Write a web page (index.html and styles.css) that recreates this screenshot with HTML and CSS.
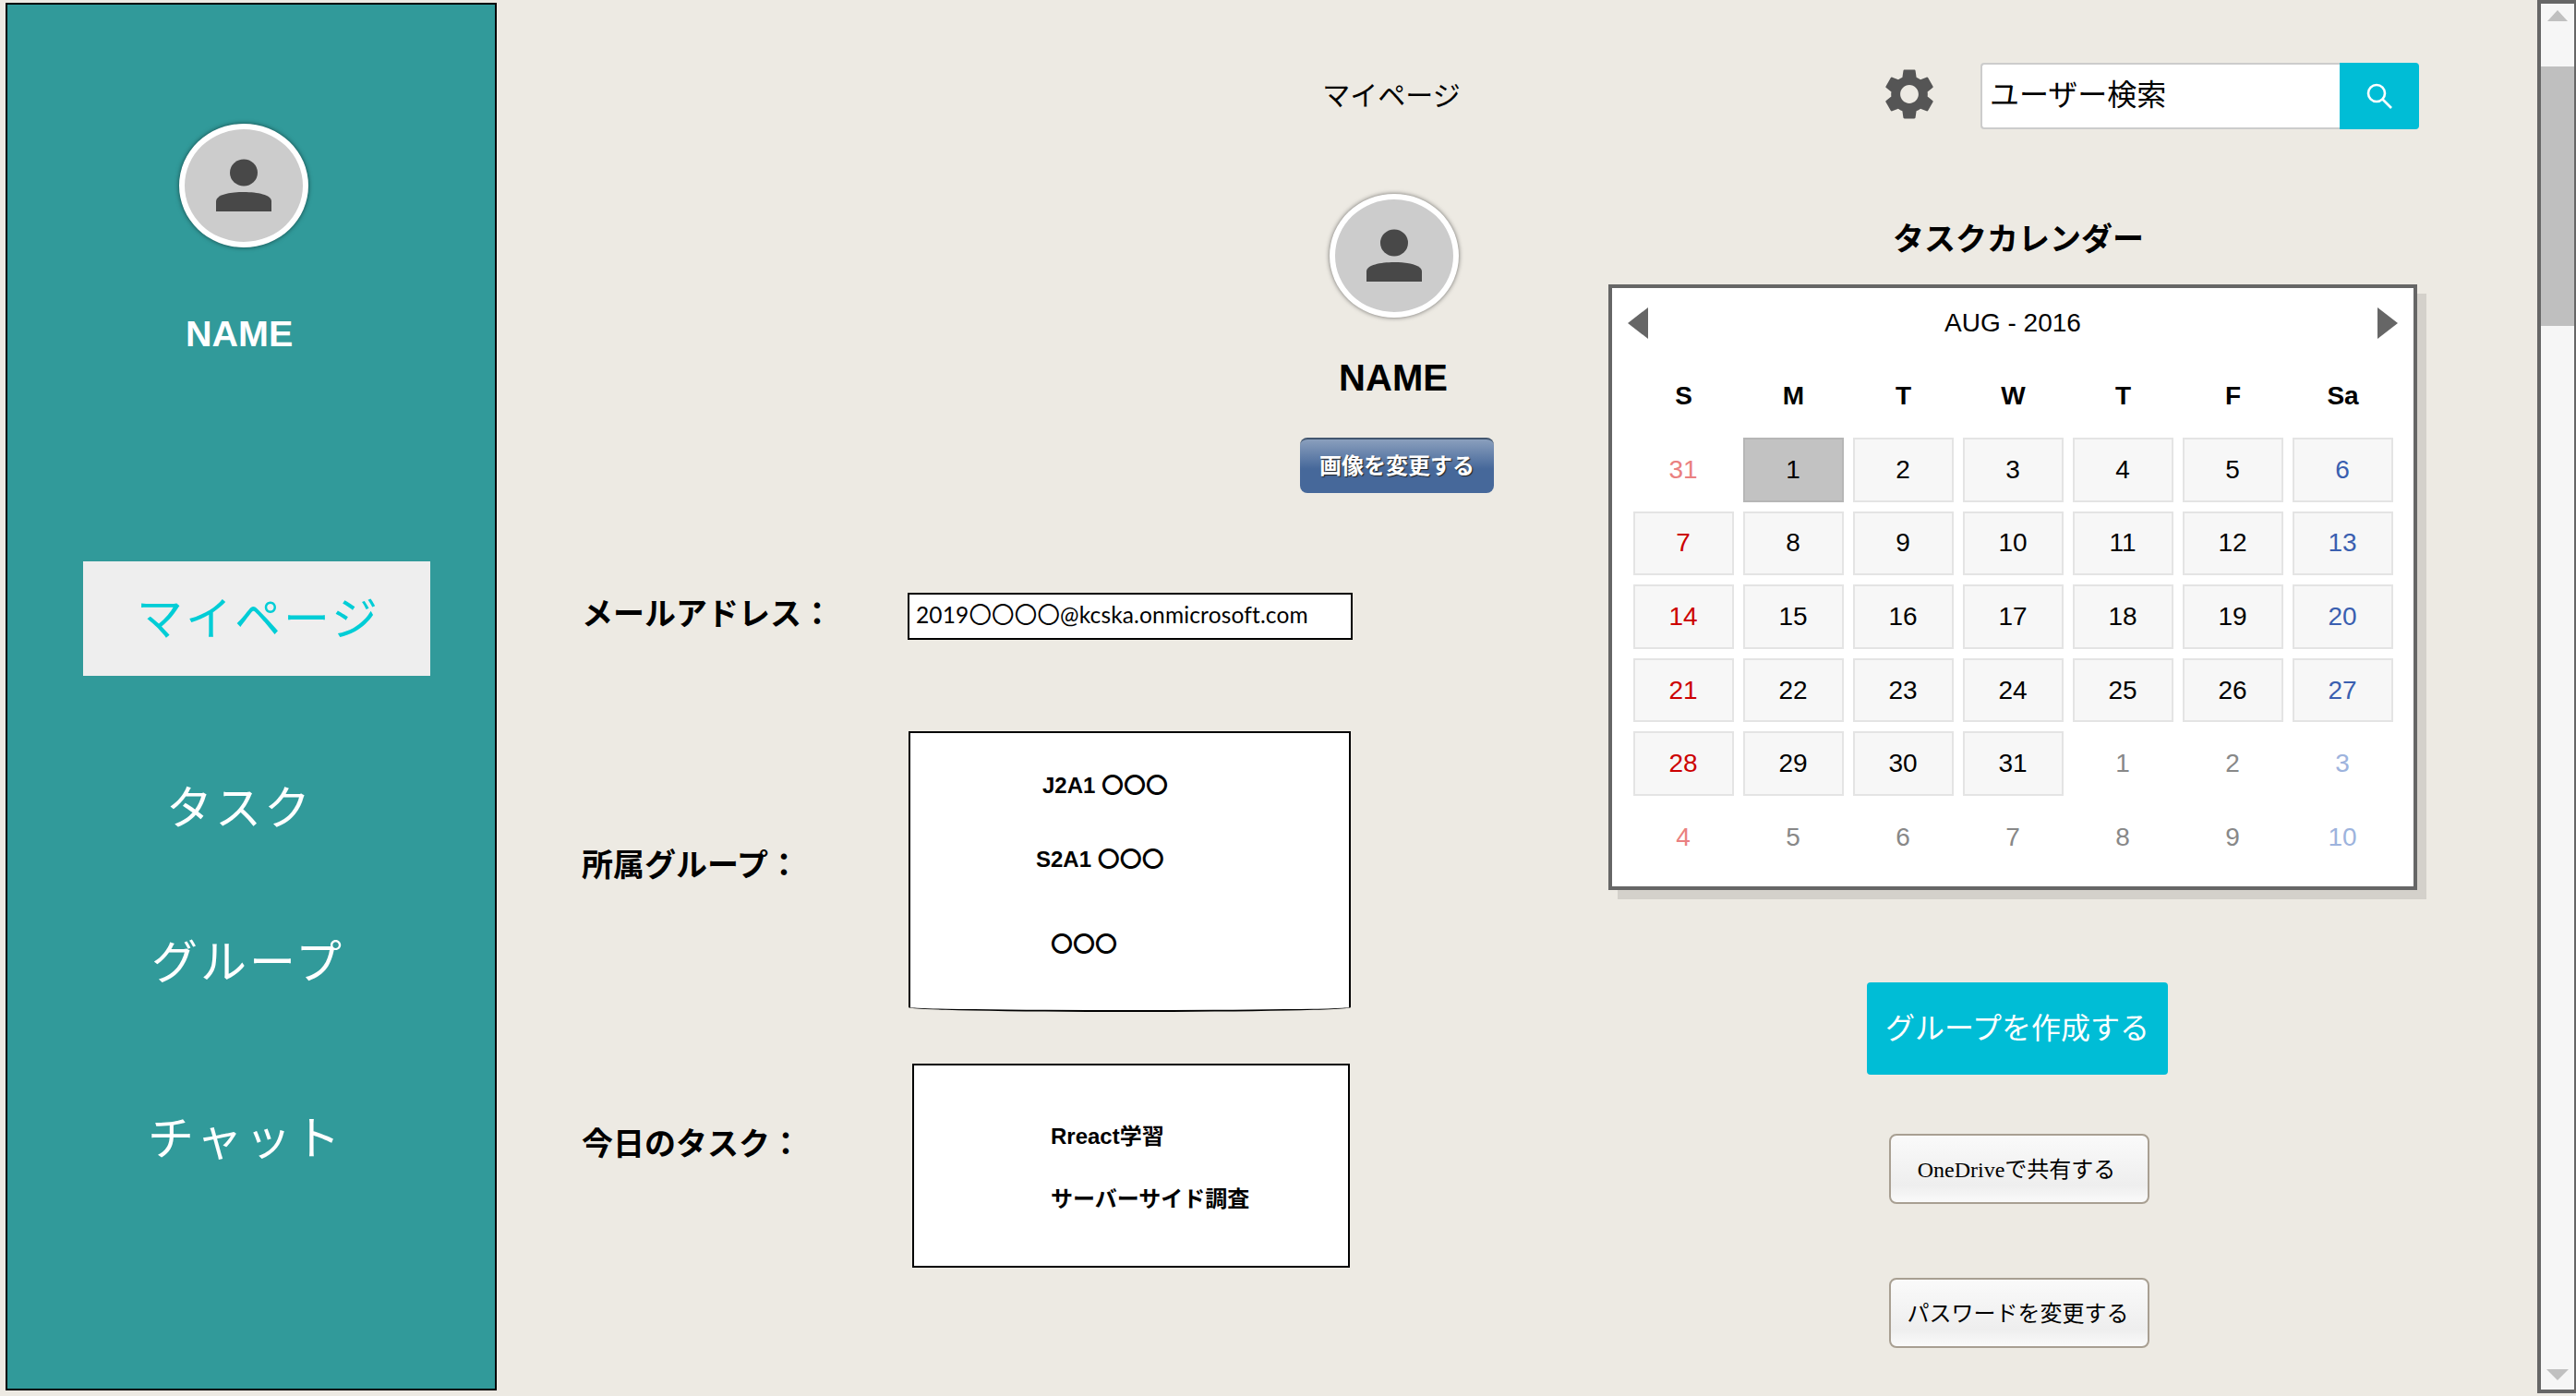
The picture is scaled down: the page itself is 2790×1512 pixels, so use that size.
FILE: index.html
```html
<!DOCTYPE html>
<html lang="ja">
<head>
  <meta charset="UTF-8" />
  <meta name="viewport" content="width=device-width, initial-scale=1.0" />
  <title>マイページ</title>
  <link rel="stylesheet" href="styles.css">
</head>
<body>
  <div class="app">
    <aside class="sidebar">
      <div class="avatar sidebar-avatar">
        <svg viewBox="6 6 128 122" width="128" height="122"><ellipse cx="70" cy="53" rx="15" ry="14.5" fill="#484848"/><path d="M40 95V84C40 77 55 74 70 74S100 77 100 84V95Z" fill="#484848"/></svg>
      </div>
      <div class="sidebar-name">NAME</div>
      <nav class="menu">
        <a class="menu-item menu-active">マイページ</a>
        <a class="menu-item menu-task">タスク</a>
        <a class="menu-item menu-group">グループ</a>
        <a class="menu-item menu-chat">チャット</a>
      </nav>
    </aside>

    <main class="center">
      <div class="profile">
        <div class="page-title">マイページ</div>
        <div class="avatar profile-avatar">
          <svg viewBox="6 6 128 122" width="128" height="122"><ellipse cx="70" cy="53" rx="15" ry="14.5" fill="#484848"/><path d="M40 95V84C40 77 55 74 70 74S100 77 100 84V95Z" fill="#484848"/></svg>
        </div>
        <div class="profile-name">NAME</div>
        <button class="change-image">画像を変更する</button>
      </div>

      <div class="fields">
        <div class="field field-mail">
          <div class="field-label">メールアドレス：</div>
          <div class="box mail-box">2019〇〇〇〇@kcska.onmicrosoft.com</div>
        </div>
        <div class="field field-group">
          <div class="field-label">所属グループ：</div>
          <div class="box group-box">
            <p class="line group-line1">J2A1 〇〇〇</p>
            <p class="line group-line2">S2A1 〇〇〇</p>
            <p class="line group-line3">〇〇〇</p>
          </div>
        </div>
        <div class="field field-today">
          <div class="field-label">今日のタスク：</div>
          <div class="box today-box">
            <p class="line today-line1">Rreact学習</p>
            <p class="line today-line2">サーバーサイド調査</p>
          </div>
        </div>
      </div>
    </main>

    <section class="right">
      <div class="topbar">
        <svg class="gear" viewBox="0 0 24 24" width="66" height="66"><path fill="#555" d="M19.14 12.94c.04-.3.06-.61.06-.94 0-.32-.02-.64-.07-.94l2.03-1.58c.18-.14.23-.41.12-.61l-1.92-3.32c-.12-.22-.37-.29-.59-.22l-2.39.96c-.5-.38-1.03-.7-1.62-.94l-.36-2.54c-.04-.24-.24-.41-.48-.41h-3.84c-.24 0-.43.17-.47.41l-.36 2.54c-.59.24-1.13.57-1.62.94l-2.39-.96c-.22-.08-.47 0-.59.22L2.74 8.87c-.12.21-.08.47.12.61l2.03 1.58c-.05.3-.09.63-.09.94s.02.64.07.94l-2.03 1.58c-.18.14-.23.41-.12.61l1.92 3.32c.12.22.37.29.59.22l2.39-.96c.5.38 1.03.7 1.62.94l.36 2.54c.05.24.24.41.48.41h3.84c.24 0 .44-.17.47-.41l.36-2.54c.59-.24 1.13-.56 1.62-.94l2.39.96c.22.08.47 0 .59-.22l1.92-3.32c.12-.22.07-.47-.12-.61l-2.01-1.58zM12 15.6c-1.98 0-3.6-1.62-3.6-3.6s1.62-3.6 3.6-3.6 3.6 1.62 3.6 3.6-1.62 3.6-3.6 3.6z"/></svg>
        <div class="search">
          <div class="search-input">ユーザー検索</div>
          <div class="search-button">
            <svg viewBox="0 0 28 28" width="28" height="28"><circle cx="11" cy="11" r="9" fill="none" stroke="#fff" stroke-width="2.6"/><path d="M17.5 17.5L27 27" stroke="#fff" stroke-width="2.6" fill="none"/></svg>
          </div>
        </div>
      </div>

      <h2 class="calendar-heading">タスクカレンダー</h2>

      <div class="calendar">
        <div class="calendar-head">
          <svg viewBox="0 0 22 34" width="22" height="34"><path d="M22 0V34L0 17Z" fill="#666"/></svg>
          <span class="calendar-month">AUG - 2016</span>
          <svg viewBox="0 0 22 34" width="22" height="34"><path d="M0 0V34L22 17Z" fill="#666"/></svg>
        </div>
        <div class="weekdays">
          <span>S</span><span>M</span><span>T</span><span>W</span><span>T</span><span>F</span><span>Sa</span>
        </div>
        <div class="days">
          <span class="day off sun">31</span><span class="day today">1</span><span class="day">2</span><span class="day">3</span><span class="day">4</span><span class="day">5</span><span class="day sat">6</span>
          <span class="day sun">7</span><span class="day">8</span><span class="day">9</span><span class="day">10</span><span class="day">11</span><span class="day">12</span><span class="day sat">13</span>
          <span class="day sun">14</span><span class="day">15</span><span class="day">16</span><span class="day">17</span><span class="day">18</span><span class="day">19</span><span class="day sat">20</span>
          <span class="day sun">21</span><span class="day">22</span><span class="day">23</span><span class="day">24</span><span class="day">25</span><span class="day">26</span><span class="day sat">27</span>
          <span class="day sun">28</span><span class="day">29</span><span class="day">30</span><span class="day">31</span><span class="day off">1</span><span class="day off">2</span><span class="day off sat">3</span>
          <span class="day off sun">4</span><span class="day off">5</span><span class="day off">6</span><span class="day off">7</span><span class="day off">8</span><span class="day off">9</span><span class="day off sat">10</span>
        </div>
      </div>

      <button class="create-group">グループを作成する</button>
      <button class="sub-button share-button">OneDriveで共有する</button>
      <button class="sub-button password-button">パスワードを変更する</button>
    </section>

    <div class="scrollbar">
      <div class="scroll-up"></div>
      <div class="scroll-thumb"></div>
      <div class="scroll-down"></div>
    </div>
  </div>
</body>
</html>
```

FILE: styles.css
```css
html, body {
  margin: 0;
  height: 100%;
  overflow: hidden;
}
body {
  background-color: #edeae3;
  color: #000;
  font-family: "Liberation Sans", "Noto Sans CJK JP", sans-serif;
}
button {
  display: block;
  padding: 0;
  cursor: pointer;
}
.app {
  display: flex;
  height: 1512px;
}

/* sidebar */
.sidebar {
  box-sizing: border-box;
  flex: none;
  width: 532px;
  height: 1503px;
  margin: 3px 0 0 6px;
  border: 2px solid #000;
  background-color: #319a9a;
}
.avatar {
  box-sizing: border-box;
  width: 140px;
  height: 134px;
  border: 6px solid #fff;
  border-radius: 50%;
  background-color: #ccc;
  box-shadow: 0 0 5px rgba(0, 0, 0, 0.55);
}
.avatar svg {
  display: block;
}
.sidebar-avatar {
  margin: 129px 0 0 186px;
}
.sidebar-name {
  margin: 73px 0 0 193px;
  color: #fff;
  font-size: 39.5px;
  font-weight: bold;
  line-height: 40px;
}
.menu {
  margin-top: 227px;
}
.menu-item {
  display: block;
  color: #fff;
  font-family: "Liberation Serif", "Noto Sans CJK JP", serif;
  font-size: 50px;
  font-weight: 400;
  letter-spacing: 3px;
  line-height: 60px;
}
.menu-active {
  width: 376px;
  height: 124px;
  margin-left: 82px;
  padding-left: 58px;
  box-sizing: border-box;
  background-color: #eee;
  color: #00cdd6;
  line-height: 126px;
}
.menu-task {
  margin-top: 114px;
  padding-left: 172px;
}
.menu-group {
  margin-top: 107px;
  padding-left: 156px;
}
.menu-chat {
  margin-top: 131px;
  padding-left: 152px;
}

/* center column */
.center {
  flex: none;
  width: 1204px;
}
.profile {
  display: flex;
  flex-direction: column;
  align-items: center;
  width: 300px;
  margin-left: 822px;
  padding-top: 84px;
}
.page-title {
  margin-left: -6px;
  font-family: "Liberation Serif", "Noto Sans CJK JP", serif;
  font-size: 30px;
  font-weight: 400;
  line-height: 40px;
}
.profile-avatar {
  margin-top: 86px;
}
.profile-name {
  margin: 45px 0 0 -2px;
  font-size: 40px;
  font-weight: bold;
  line-height: 40px;
}
.change-image {
  width: 210px;
  height: 60px;
  margin: 45px 0 0 6px;
  padding-bottom: 6px;
  border: none;
  border-top: 2px solid #42566f;
  border-radius: 8px;
  background: linear-gradient(#8a9fbd, #46689a 55%, #46689a);
  color: #fff;
  font-family: "Liberation Sans", "Noto Sans CJK JP", sans-serif;
  font-size: 24px;
  font-weight: bold;
  text-shadow: 1px 1px 1px #222;
}
.fields {
  margin: 108px 0 0 92px;
}
.field {
  display: flex;
  align-items: flex-start;
}
.field-label {
  flex: none;
  width: 353px;
  font-size: 34px;
  font-weight: bold;
  line-height: 44px;
}
.field-mail .field-label {
  margin-top: 1px;
}
.field-group {
  margin-top: 99px;
}
.field-group .field-label {
  margin-top: 123px;
}
.field-today {
  margin-top: 56px;
}
.field-today .field-label {
  margin-top: 65px;
}
.box {
  box-sizing: border-box;
  flex: none;
  border: 2px solid #000;
  background-color: #fff;
}
.mail-box {
  width: 482px;
  height: 51px;
  padding-left: 7px;
  font-family: "Lato", "Noto Sans CJK JP", sans-serif;
  font-size: 24.5px;
  letter-spacing: 0.15px;
  line-height: 44px;
  white-space: nowrap;
}
.group-box {
  width: 479px;
  height: 304px;
  margin-left: 1px;
  padding-top: 42px;
  border-bottom-left-radius: 50% 5px;
  border-bottom-right-radius: 50% 5px;
}
.today-box {
  width: 474px;
  height: 221px;
  margin-left: 5px;
  padding-top: 62px;
}
.line {
  margin: 0;
  font-size: 24px;
  font-weight: bold;
  line-height: 30px;
  white-space: nowrap;
}
.group-line1 {
  padding-left: 143px;
}
.group-line2 {
  margin-top: 50px;
  padding-left: 136px;
}
.group-line3 {
  margin-top: 62px;
  padding-left: 152px;
}
.today-line1 {
  padding-left: 148px;
}
.today-line2 {
  margin-top: 38px;
  padding-left: 148px;
}

/* right column */
.right {
  flex: none;
  width: 886px;
}
.topbar {
  display: flex;
  align-items: center;
  height: 72px;
  margin-top: 68px;
  padding-left: 293px;
  gap: 44px;
}
.gear {
  display: block;
  margin-top: -4px;
}
.search {
  display: flex;
  width: 475px;
  height: 72px;
}
.search-input {
  box-sizing: border-box;
  flex: 1;
  padding-left: 8px;
  border: 2px solid #ccc;
  border-right: none;
  border-radius: 4px 0 0 4px;
  background-color: #fff;
  font-family: "Liberation Serif", "Noto Sans CJK JP", serif;
  font-size: 32px;
  font-weight: 400;
  line-height: 66px;
}
.search-button {
  display: flex;
  align-items: center;
  justify-content: center;
  width: 86px;
  border-radius: 0 4px 4px 0;
  background-color: #00bdd6;
}
.calendar-heading {
  margin: 96px 0 0 308px;
  font-size: 34px;
  font-weight: bold;
  line-height: 46px;
}
.calendar {
  box-sizing: border-box;
  width: 876px;
  height: 656px;
  margin-top: 26px;
  padding: 0 22px 0 23px;
  border: 4px solid #666;
  background-color: #fff;
  box-shadow: 10px 10px 0 #d4d1cb;
}
.calendar-head {
  display: flex;
  align-items: center;
  justify-content: space-between;
  height: 76px;
  margin: 0 -5px 0 -6px;
}
.calendar-month {
  font-size: 28px;
}
.weekdays {
  display: grid;
  grid-template-columns: repeat(7, 109px);
  column-gap: 10px;
  height: 78px;
  margin-bottom: 8px;
  font-size: 28px;
  font-weight: bold;
  line-height: 81px;
  text-align: center;
}
.days {
  display: grid;
  grid-template-columns: repeat(7, 109px);
  grid-auto-rows: 69.6px;
  gap: 10px;
}
.day {
  box-sizing: border-box;
  display: flex;
  align-items: center;
  justify-content: center;
  padding-right: 1px;
  border: 2px solid #e4e4e4;
  background-color: #f7f7f7;
  font-size: 28px;
}
.day.sun {
  color: #cc0000;
}
.day.sat {
  color: #3a5fb0;
}
.day.today {
  border-color: #b6b6b6;
  background-color: #c2c2c2;
}
.day.off {
  border-color: transparent;
  background-color: transparent;
  color: #888;
}
.day.off.sun {
  color: #ea8080;
}
.day.off.sat {
  color: #9db3dd;
}
.create-group {
  width: 326px;
  height: 100px;
  margin: 100px 0 0 280px;
  padding-bottom: 6px;
  border: none;
  border-radius: 4px;
  background-color: #00bdd6;
  color: #fff;
  font-family: "Liberation Serif", "Noto Sans CJK JP", serif;
  font-size: 32px;
  font-weight: 400;
}
.sub-button {
  box-sizing: border-box;
  width: 282px;
  height: 76px;
  margin-left: 304px;
  padding-bottom: 3px;
  border: 2px solid #a89f92;
  border-radius: 8px;
  background: linear-gradient(#fafafa, #eee 75%, #fafafa);
  color: #000;
  font-family: "Liberation Serif", "Noto Sans CJK JP", serif;
  font-size: 24px;
  font-weight: 400;
}
.share-button {
  margin-top: 64px;
  padding-right: 6px;
}
.password-button {
  margin-top: 80px;
  padding-right: 3px;
}

/* scrollbar */
.scrollbar {
  box-sizing: border-box;
  display: flex;
  flex-direction: column;
  flex: none;
  width: 42px;
  height: 1509px;
  margin-left: auto;
  border: 4px solid #666;
  border-right-width: 2px;
  background-color: #f6f6f6;
}
.scroll-up {
  flex: none;
  align-self: center;
  width: 0;
  height: 0;
  margin: 7px 0 49px;
  border-right: 11px solid transparent;
  border-bottom: 12px solid #c0c0c0;
  border-left: 11px solid transparent;
}
.scroll-thumb {
  flex: none;
  height: 281px;
  background-color: #bfbfbf;
}
.scroll-down {
  align-self: center;
  width: 0;
  height: 0;
  margin: auto 0 10px;
  border-top: 12px solid #c0c0c0;
  border-right: 12px solid transparent;
  border-left: 12px solid transparent;
}
```
